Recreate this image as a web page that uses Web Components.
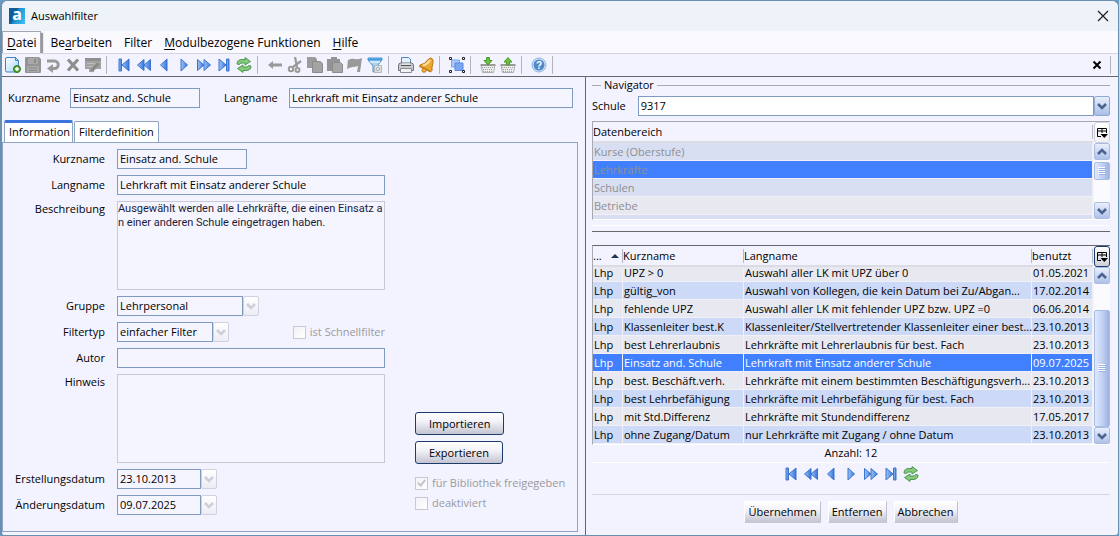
<!DOCTYPE html>
<html lang="de">
<head>
<meta charset="utf-8">
<title>Auswahlfilter</title>
<style>
    html, body {
        margin: 0;
        height: 100%;
    }

    body {
        background: #6a9cc4;
        font: 11px/14px "Open Sans", "Noto Sans", sans-serif;
        color: #000;
    }
</style>
</head>
<body>
<filter-window></filter-window>

<script>
const ICONS = {
    fresh: `<defs><linearGradient id="g" x2="1" y2="1"><stop stop-color="#fff"/><stop offset="1" stop-color="#a8d6fa"/></linearGradient></defs>
        <path d="M2 .5h8.500l3 3V15H2q-1.500 0-1.500-1.500V2Q.5.5 2 .5z" fill="url(#g)" stroke="#3c84c8"/><path d="M10.500.5v3h3z" fill="#d5ecfc" stroke="#3c84c8"/>
        <circle cx="12" cy="12" r="3.500" fill="#58a83a" stroke="#2f7a1c"/><path d="M12 10v4M10 12h4" stroke="#fff" stroke-width="1.500"/>`,
    save: `<path d="M0 1q0-1 1-1h13l2 2v13q0 1-1 1H1q-1 0-1-1z" fill="#949494"/><path d="M3 1h10v6H3zM2 9h12v6H2z" fill="#a8a8a8"/>
        <path d="M4 11h8M4 13.500h8" stroke="#8c8c8c"/><path d="M9 2h2v4H9z" fill="#8a8a8a"/>`,
    undo: `<path d="M2 4h7.500a3.700 3.700 0 0 1 0 7.500H7" fill="none" stroke="#999" stroke-width="3"/><path d="M8 7v9l-6-4.500z" fill="#999"/>`,
    cross: `<path d="M3 2.500l10 11M13 2.500l-10 11" stroke="#8e8e8e" stroke-width="3.200"/>`,
    edit: `<path d="M0 1h16v11H9v3H4v-3H0z" fill="#a2a2a2"/><path d="M0 1h16v3H0z" fill="#8f8f8f"/><path d="M2 6.500h8M2 9.500h6" stroke="#bcbcbc"/><path d="M12.500 5l2.500 2.500-7 7-3 .5.500-3z" fill="#888" stroke="#b0b0b0" stroke-width=".6"/>`,
    first: `<path d="M3 2h2.500v12H3z" class="b"/><path d="M13 2v12L6 8z" class="b"/>`,
    rewind: `<path d="M8 2.500v11L1.500 8z" class="b"/><path d="M14.500 2.500v11L8 8z" class="b"/>`,
    prev: `<path d="M11 2v12L4.500 8z" class="b"/>`,
    next: `<path d="M5 2v12L11.500 8z" class="b"/>`,
    forward: `<path d="M1.500 2.500v11L8 8z" class="b"/><path d="M8 2.500v11L14.500 8z" class="b"/>`,
    last: `<path d="M3 2v12L10 8z" class="b"/><path d="M10.500 2H13v12h-2.500z" class="b"/>`,
    refresh: `<path d="M1 7Q1 2.500 6 2.500H9V.500L14.500 4.500 9 8V6H6Q3.500 6 3.500 7.500z" fill="#86c87c" stroke="#4c9a50"/>
        <path d="M15 9Q15 13.500 10 13.500H7v2L1.500 11.500 7 8v2h3q2.500 0 2.500-1.500z" fill="#86c87c" stroke="#4c9a50"/>`,
    back: `<path d="M1 8l5-4v2.500h9v3H6V12z" fill="#999"/>`,
    cut: `<path d="M8 0l2 10M14 4l-8 6" stroke="#999" stroke-width="2.200"/><circle cx="4" cy="12" r="2.200" fill="none" stroke="#999" stroke-width="2"/><circle cx="10.500" cy="13" r="2" fill="none" stroke="#999" stroke-width="2"/>`,
    copy: `<path d="M0 0h8l2 2v9H0z" fill="#9c9c9c"/><path d="M5.500 4.500h8l2 2v9h-10z" fill="#a4a4a4" stroke="#8c8c8c"/>`,
    paste: `<path d="M0 2h4V0h6v2h3v12H0z" fill="#949494"/><path d="M5.500 5.500h8l2 2v8h-10z" fill="#a6a6a6" stroke="#8c8c8c"/>`,
    flag: `<path d="M1 3q4-2 7-1t7-1l-2 14h-3l1-6q-3 1-5 1t-6 2z" fill="#999"/>`,
    funnel: `<path d="M1 1h14v2l-5 6v5l-4 1V9L1 3z" fill="#a5d2f2" stroke="#4a92cc"/><path d="M1 1.500h14v2H1z" fill="#3f9ae0"/><path d="M3 5h10" stroke="#fff"/>
        <path d="M7.500 8.500h7v7h-7z" fill="#dcdfe2" stroke="#b4b8bc"/><circle cx="11" cy="12" r="1.500" fill="#fff" stroke="#a0a4a8"/>`,
    print: `<path d="M3.500 7V.5h7l2 2V7" fill="#e6f2fd" stroke="#4c86bf"/><path d="M.5 9q0-3 2-3h11q2 0 2 3v4.500H.500z" fill="#c8cace" stroke="#70747a"/>
        <path d="M3 8.500h10" stroke="#505458"/><path d="M2.500 11.500h11v4h-11z" fill="#f2f2f2" stroke="#8a8e94"/><path d="M4 7h8" stroke="#fff"/>`,
    bell: `<path d="M10.500 2Q13 0 14.500 2q1.200 2 .2 5-1 3-.7 6.500l-1.500 1.500L1.500 9.500 2 8Q7 7.500 10.500 2z" fill="#eda730" stroke="#b97412"/><path d="M5 8.500q5-1.500 7-5.500" stroke="#fbe09a" stroke-width="2" fill="none"/><path d="M2 9l11 5.500" stroke="#c47e14"/><circle cx="6" cy="13.300" r="2" fill="#f2b440" stroke="#b97412"/>`,
    group: `<path d="M2.500 3h8v7h-8z" fill="#a9c8f6" stroke="#7da6ea"/><path d="M6 6h8v7.500H6z" fill="#7aa6f0" stroke="#5b8be0"/>
        <g fill="#fff" stroke="#222"><path d="M.5.5h2v2h-2zM13.500.5h2v2h-2zM.5 13.500h2v2h-2zM13.500 13.500h2v2h-2z"/></g>`,
    basketIn: `<path d="M1 8h14l-1.500 7.500h-11z" fill="#ececec" stroke="#b0b0b0"/><path d="M.500 8h15" stroke="#8a8a8a" stroke-width="1.500"/><path d="M2 10.500h12M3 12.500h10M3 14.500h10" stroke="#a0a0a0" stroke-dasharray="1 1"/>
        <path d="M6.500.5h3v3H12L8 8 4 3.500h2.500z" fill="#6fbf3f" stroke="#4a9a2a"/>`,
    basketOut: `<path d="M1 8h14l-1.500 7.500h-11z" fill="#ececec" stroke="#b0b0b0"/><path d="M.500 8h15" stroke="#8a8a8a" stroke-width="1.500"/><path d="M2 10.500h12M3 12.500h10M3 14.500h10" stroke="#a0a0a0" stroke-dasharray="1 1"/>
        <path d="M6.500 8V5H4L8 .5 12 5H9.500v3z" fill="#6fbf3f" stroke="#4a9a2a"/>`,
    help: `<circle cx="8" cy="8" r="7" fill="#d4e4f5" stroke="#8fb3da"/><circle cx="8" cy="8" r="5.500" fill="#5088c8"/><text x="8" y="12" text-anchor="middle" font-size="10" font-weight="700" fill="#fff">?</text>`,
    close: `<path d="M4.500 4.500l7 7M11.500 4.500l-7 7" stroke="#000" stroke-width="2"/>`,
    windowClose: `<path d="M3 3l10 10M13 3L3 13" stroke="#222" stroke-width="1.300"/>`,
    columns: `<path d="M12.500 8V3.500h-9v8H7M3.500 6h9M8 3.500V8" fill="none" stroke="#000"/><path d="M6.500 9h7.500l-3.700 4z"/>`,
    up: `<path d="M4 10l4-4 4 4" fill="none" stroke="#4a6390" stroke-width="2.600"/>`,
    down: `<path d="M4 6l4 4 4-4" fill="none" stroke="#4a6390" stroke-width="2.600"/>`,
    downOff: `<path d="M4 6l4 4 4-4" fill="none" stroke="#cfcfdc" stroke-width="2.600"/>`,
    grip: `<path d="M4 4.500h7M4 6.500h7M4 8.500h7M4 10.500h7" stroke="#fff"/><path d="M5 5.500h7M5 7.500h7M5 9.500h7M5 11.500h7" stroke="#9db3e2"/>`
};

// attaches an open shadow root with the given markup
function render(host, html) {
    host.attachShadow({ mode: 'open' }).innerHTML = html;
}

class UiIcon extends HTMLElement {
    connectedCallback() {
        render(this, `
            <style>
                :host {
                    display: block;
                    flex: none;
                    width: 16px;
                    height: 16px;
                }

                svg {
                    display: block;
                }

                .b {
                    fill: url(#blue);
                    stroke: #3c72d0;
                }
            </style>
            <svg width="16" height="16" viewBox="0 0 16 16" aria-hidden="true">
                <defs><linearGradient id="blue"><stop stop-color="#9cc8f6"/><stop offset="1" stop-color="#3474dc"/></linearGradient></defs>
                ${ICONS[this.getAttribute('name')]}
            </svg>
        `);
    }
}
customElements.define('ui-icon', UiIcon);

class IconStrip extends HTMLElement {
    connectedCallback() {
        const items = this.getAttribute('icons').split(' ').map(name => name === '|'
            ? '<i></i>'
            : `<button type="button" aria-label="${name}"><ui-icon name="${name}"></ui-icon></button>`);
        render(this, `
            <style>
                :host {
                    display: flex;
                    align-items: center;
                }

                button {
                    width: 20px;
                    height: 20px;
                    padding: 2px;
                    border: 0;
                    background: none;
                }

                i {
                    flex: none;
                    width: 1px;
                    height: 18px;
                    margin: 0 7px 0 3px;
                    background: #b4b4bc;
                }
            </style>
            ${items.join('')}
        `);
    }
}
customElements.define('icon-strip', IconStrip);

class TitleBar extends HTMLElement {
    connectedCallback() {
        render(this, `
            <style>
                :host {
                    display: flex;
                    align-items: center;
                    gap: 6px;
                    height: 30px;
                    padding: 0 7px;
                    box-sizing: border-box;
                    background: #edf3f9;
                }

                .logo {
                    width: 16px;
                    height: 16px;
                    background: linear-gradient(115deg, #0f5c98 35%, #1f93d4 50%, #3fc0f5);
                    color: #fff;
                    font-weight: 700;
                    font-size: 16px;
                    line-height: 12px;
                    text-align: center;
                }

                h1 {
                    flex: 1;
                    margin: 0;
                    font-size: 11px;
                    font-weight: 400;
                }

                button {
                    padding: 0;
                    border: 0;
                    background: none;
                }
            </style>
            <span class="logo">a</span>
            <h1><slot></slot></h1>
            <button type="button" aria-label="Schließen"><ui-icon name="windowClose"></ui-icon></button>
        `);
    }
}
customElements.define('title-bar', TitleBar);

class MenuBar extends HTMLElement {
    connectedCallback() {
        render(this, `
            <style>
                :host {
                    display: block;
                    background: #f9f9fe;
                    border-bottom: 1px solid #d4d4e2;
                }

                nav {
                    display: flex;
                    height: 22px;
                }

                button {
                    padding: 2px 6px 0;
                    border: 0;
                    background: none;
                    font: inherit;
                    font-size: 12px;
                }

                button.open {
                    padding: 1px 4px 0;
                    margin-right: 3px;
                    border: 1px solid #a4a4b4;
                    border-bottom: 0;
                    box-shadow: 2px 2px 1px #999;
                    clip-path: inset(0 -3px 0 0);
                }

                u {
                    text-underline-offset: 2px;
                }
            </style>
            <nav>
                <button type="button" class="open"><u>D</u>atei</button>
                <button type="button">Be<u>a</u>rbeiten</button>
                <button type="button">Filter</button>
                <button type="button"><u>M</u>odulbezogene Funktionen</button>
                <button type="button"><u>H</u>ilfe</button>
            </nav>
        `);
    }
}
customElements.define('menu-bar', MenuBar);

const FIELD_STYLE = `
    label {
        white-space: nowrap;
    }

    input, select, textarea {
        box-sizing: border-box;
        width: 100%;
        min-width: 0;
        height: 20px;
        margin: 0;
        padding: 0 2px;
        border: 1px solid #7f9cc0;
        border-radius: 0;
        background: #f5f5ff;
        color: #000;
        font: inherit;
        opacity: 1;
        appearance: none;
        outline: 0;
    }

    input {
        padding-bottom: 2px;
    }

    textarea {
        display: block;
        height: 89px;
        padding: 0;
        border-color: #c8c8d6;
        color: #1c1c3c;
        font-family: Roboto, "Liberation Sans", sans-serif;
        resize: none;
        overflow: hidden;
        white-space: pre;
    }

    .combo {
        display: flex;
        min-width: 0;
    }

    .arrow {
        display: flex;
        align-items: center;
        justify-content: center;
        flex: none;
        box-sizing: border-box;
        width: 16px;
        height: 20px;
        padding: 0;
        border: 1px solid #d0d0de;
        border-radius: 2px;
        background: linear-gradient(#fff, #ececf4);
        overflow: hidden;
    }
`;

// label beside a text box, text area, drop-down or date box
class FormField extends HTMLElement {
    connectedCallback() {
        const value = this.getAttribute('value') || '';
        const arrow = this.hasAttribute('active')
            ? '<span class="arrow active"><ui-icon name="down"></ui-icon></span>'
            : '<span class="arrow"><ui-icon name="downOff"></ui-icon></span>';
        const control = {
            text: `<input id="f" type="text" value="${value}">`,
            area: `<textarea id="f">${value}</textarea>`,
            select: `<div class="combo"><select id="f"><option>${value}</option></select>${arrow}</div>`,
            date: `<div class="combo"><input id="f" type="text" value="${value}">${arrow}</div>`
        }[this.getAttribute('kind') || 'text'];
        render(this, `
            <style>
                ${FIELD_STYLE}
                :host {
                    display: grid;
                    grid-template-columns: var(--label-width, auto) minmax(0, 1fr);
                    column-gap: 12px;
                    align-items: center;
                    text-align: var(--label-align, left);
                }

                :host([kind=area]) {
                    align-items: start;
                }

                :host([kind=area]) label {
                    padding-top: 1px;
                }

                :host([active]) select {
                    background: #fff;
                }

                .active {
                    border-color: #8ea9d6;
                    background: linear-gradient(#e8effc, #aabfe6);
                }
            </style>
            <label for="f">${this.getAttribute('label')}</label>
            ${control}
        `);
    }
}
customElements.define('form-field', FormField);

class CheckField extends HTMLElement {
    connectedCallback() {
        render(this, `
            <style>
                :host {
                    display: block;
                    color: #9a9a9e;
                }

                label {
                    display: flex;
                    align-items: center;
                    gap: 4px;
                    white-space: nowrap;
                }

                input {
                    appearance: none;
                    display: grid;
                    place-items: center;
                    flex: none;
                    box-sizing: border-box;
                    width: 13px;
                    height: 13px;
                    margin: 0;
                    border: 1px solid #c8c8d4;
                    background: linear-gradient(135deg, #f2f2f6, #fff);
                }

                input:checked::before {
                    content: "";
                    width: 3px;
                    height: 6px;
                    margin-bottom: 2px;
                    border: solid #c4c4d0;
                    border-width: 0 2px 2px 0;
                    transform: rotate(40deg);
                }
            </style>
            <label><input type="checkbox" disabled ${this.hasAttribute('checked') ? 'checked' : ''}><slot></slot></label>
        `);
    }
}
customElements.define('check-field', CheckField);

class PushButton extends HTMLElement {
    connectedCallback() {
        render(this, `
            <style>
                :host {
                    display: block;
                }

                button {
                    height: 23px;
                    padding: 0 13px;
                    border: 1px solid #1c3c6c;
                    border-radius: 3px;
                    background: linear-gradient(#fff, #f2f2f8 40%, #c4c4d2);
                    font: inherit;
                    color: inherit;
                    white-space: nowrap;
                }

                :host([flat]) button {
                    height: 22px;
                    padding: 0 3px;
                    border-color: #fff #c0c0ca #c8c8d2 #fff;
                    border-radius: 0;
                }
            </style>
            <button type="button"><slot></slot></button>
        `);
    }
}
customElements.define('push-button', PushButton);

class ScrollRail extends HTMLElement {
    connectedCallback() {
        const before = this.getAttribute('before');
        const thumb = this.getAttribute('thumb');
        const after = this.getAttribute('after');
        render(this, `
            <style>
                :host {
                    display: flex;
                    flex-direction: column;
                    width: 16px;
                    background: #fbfbff;
                }

                button, .thumb {
                    display: flex;
                    align-items: center;
                    justify-content: center;
                    box-sizing: border-box;
                    width: 16px;
                    height: 17px;
                    padding: 0;
                    border: 1px solid #a9bce4;
                    border-radius: 2px;
                    background: linear-gradient(#e9effc, #b0c2e8);
                    overflow: hidden;
                }

                .columns {
                    height: 21px;
                    border-color: #d0d0dc;
                    border-radius: 3px;
                    background: linear-gradient(#fff, #f0f0f6);
                }

                :host([focused]) .columns {
                    border-color: #1c3c6c;
                    background: linear-gradient(#fff, #d0d0dc);
                }

                .track {
                    flex: 1;
                    display: flex;
                    flex-direction: column;
                }

                .thumb {
                    flex: ${thumb};
                    background: linear-gradient(90deg, #dfe8fc, #c3d2f4 50%, #9db2e2);
                }
            </style>
            <button type="button" class="columns" aria-label="Spalten"><ui-icon name="columns"></ui-icon></button>
            <button type="button" aria-label="Nach oben"><ui-icon name="up"></ui-icon></button>
            <div class="track">
                <div style="flex: ${before}"></div>
                <div class="thumb"><ui-icon name="grip"></ui-icon></div>
                <div style="flex: ${after}"></div>
            </div>
            <button type="button" aria-label="Nach unten"><ui-icon name="down"></ui-icon></button>
        `);
    }
}
customElements.define('scroll-rail', ScrollRail);

const TABLE_STYLE = `
    :host {
        display: flex;
        gap: 1px;
        box-sizing: border-box;
        border-top: 1px solid #a8a8b0;
        border-left: 1px solid #a8a8b0;
        border-bottom: 1px solid #fff;
    }

    .view {
        flex: 1;
        min-width: 0;
        overflow: hidden;
    }

    table {
        width: 100%;
        table-layout: fixed;
        border-collapse: separate;
        border-spacing: 0;
    }

    th, td {
        box-sizing: border-box;
        padding: 0 1px;
        text-align: left;
        font-weight: 400;
        white-space: nowrap;
    }

    th {
        position: sticky;
        top: 0;
        height: 21px;
        padding: 0;
        background: linear-gradient(#b8b8c4, #b8b8c4) right center / 1px 14px no-repeat #f3f3ff;
        border-bottom: 2px solid #dcdce4;
    }

    td {
        height: 18px;
        border-bottom: 1px solid #f0f0f6;
        border-right: 1px solid #f0f0f6;
    }
`;

class AreaTable extends HTMLElement {
    connectedCallback() {
        const rows = ['Kurse (Oberstufe)', 'Lehrkräfte', 'Schulen', 'Betriebe', ''];
        render(this, `
            <style>
                ${TABLE_STYLE}
                .view {
                    height: 97px;
                }

                td {
                    background: #d8dff2;
                    color: #8e8e92;
                }

                tr:nth-child(4) td {
                    background: #e8e8f0;
                }

                tr.selected td {
                    background: #4080ff;
                    color: #8c8e94;
                }
            </style>
            <div class="view">
                <table>
                    <thead><tr><th>Datenbereich</th></tr></thead>
                    <tbody>${rows.map((r, i) => `<tr${i === 1 ? ' class="selected"' : ''}><td>${r}</td></tr>`).join('')}</tbody>
                </table>
            </div>
            <scroll-rail before="2" thumb="17" after="23"></scroll-rail>
        `);
    }
}
customElements.define('area-table', AreaTable);

class FilterTable extends HTMLElement {
    connectedCallback() {
        const rows = [
            ['UPZ &gt; 0', 'Auswahl aller LK mit UPZ über 0', '01.05.2021'],
            ['gültig_von', 'Auswahl von Kollegen, die kein Datum bei Zu/Abgan...', '17.02.2014'],
            ['fehlende UPZ', 'Auswahl aller LK mit fehlender UPZ bzw. UPZ =0', '06.06.2014'],
            ['Klassenleiter best.K', 'Klassenleiter/Stellvertretender Klassenleiter einer best...', '23.10.2013'],
            ['best Lehrerlaubnis', 'Lehrkräfte mit Lehrerlaubnis für best. Fach', '23.10.2013'],
            ['Einsatz and. Schule', 'Lehrkraft mit Einsatz anderer Schule', '09.07.2025'],
            ['best. Beschäft.verh.', 'Lehrkräfte mit einem bestimmten Beschäftigungsverh...', '23.10.2013'],
            ['best Lehrbefähigung', 'Lehrkräfte mit Lehrbefähigung für best. Fach', '23.10.2013'],
            ['mit Std.Differenz', 'Lehrkräfte mit Stundendifferenz', '17.05.2017'],
            ['ohne Zugang/Datum', 'nur Lehrkräfte mit Zugang / ohne Datum', '23.10.2013']
        ];
        render(this, `
            <style>
                ${TABLE_STYLE}
                :host {
                    border-top-color: #66666c;
                }

                .view {
                    height: 198px;
                }

                td {
                    padding-right: 0;
                    background: #e8e8f0;
                }

                tr:nth-child(even) td {
                    background: #ccd9f7;
                }

                tr.selected td {
                    background: #4080ff;
                    color: #fff;
                }

                .type {
                    width: 30px;
                }

                .short {
                    width: 121px;
                }

                .used {
                    width: 61px;
                }

                .sort {
                    display: flex;
                    justify-content: space-between;
                    align-items: center;
                    padding-right: 4px;
                }
            </style>
            <div class="view">
                <table>
                    <thead>
                        <tr>
                            <th class="type"><span class="sort">...<svg width="8" height="4"><path d="M0 4l4-4 4 4z" fill="#1c3850"/></svg></span></th>
                            <th class="short">Kurzname</th>
                            <th>Langname</th>
                            <th class="used">benutzt</th>
                        </tr>
                    </thead>
                    <tbody>
                        ${rows.map((r, i) => `<tr${i === 5 ? ' class="selected"' : ''}><td>Lhp</td>${r.map(c => `<td>${c}</td>`).join('')}</tr>`).join('')}
                    </tbody>
                </table>
            </div>
            <scroll-rail focused before="26" thumb="117" after="0"></scroll-rail>
        `);
        // the list stands scrolled to its end
        const view = this.shadowRoot.querySelector('.view');
        view.scrollTop = view.scrollHeight;
    }
}
customElements.define('filter-table', FilterTable);

class FilterForm extends HTMLElement {
    connectedCallback() {
        render(this, `
            <style>
                :host {
                    display: flex;
                    flex-direction: column;
                    box-sizing: border-box;
                    padding: 11px 7px 3px 0;
                }

                .head {
                    display: flex;
                    gap: 24px;
                    padding-left: 6px;
                    padding-right: 5px;
                    margin-bottom: 12px;
                }

                .head form-field:first-child {
                    --label-width: 50px;
                    flex: 0 0 192px;
                }

                .head form-field:last-child {
                    --label-width: 53px;
                    flex: 1;
                }

                .tabs {
                    display: flex;
                    align-items: flex-end;
                    gap: 1px;
                    padding-left: 2px;
                }

                .tabs button {
                    height: 21px;
                    padding: 0 4px;
                    border: 1px solid #8ea4c4;
                    border-bottom: 0;
                    border-radius: 2px 2px 0 0;
                    background: #fff;
                    font: inherit;
                }

                .tabs button.current {
                    height: 22px;
                    border-top: 3px solid #3a74e0;
                    padding: 0 2px 2px 4px;
                }

                .panel {
                    flex: 1;
                    display: flex;
                    gap: 30px;
                    padding: 6px 7px 15px;
                    border: 1px solid #8ea4c4;
                }

                .fields {
                    --label-width: 95px;
                    --label-align: right;
                    flex: 0 1 375px;
                    display: flex;
                    flex-direction: column;
                    gap: 6px;
                }

                .short {
                    width: 237px;
                }

                .group {
                    width: 249px;
                }

                .type {
                    display: flex;
                    align-items: center;
                    justify-content: space-between;
                }

                .type form-field {
                    width: 219px;
                }

                .date {
                    width: 207px;
                }

                .actions {
                    display: flex;
                    flex-direction: column;
                    justify-content: flex-end;
                    gap: 6px;
                    padding-bottom: 6px;
                }

                .checks {
                    display: flex;
                    flex-direction: column;
                    gap: 6px;
                    padding-top: 6px;
                }
            </style>
            <div class="head">
                <form-field label="Kurzname" value="Einsatz and. Schule"></form-field>
                <form-field label="Langname" value="Lehrkraft mit Einsatz anderer Schule"></form-field>
            </div>
            <div class="tabs" role="tablist">
                <button type="button" role="tab" class="current" aria-selected="true">Information</button>
                <button type="button" role="tab">Filterdefinition</button>
            </div>
            <section class="panel">
                <div class="fields">
                    <form-field class="short" label="Kurzname" value="Einsatz and. Schule"></form-field>
                    <form-field label="Langname" value="Lehrkraft mit Einsatz anderer Schule"></form-field>
                    <form-field kind="area" label="Beschreibung" value="Ausgewählt werden alle Lehrkräfte, die einen Einsatz a&#10;n einer anderen Schule eingetragen haben."></form-field>
                    <form-field class="group" kind="select" label="Gruppe" value="Lehrpersonal"></form-field>
                    <div class="type">
                        <form-field kind="select" label="Filtertyp" value="einfacher Filter"></form-field>
                        <check-field>ist Schnellfilter</check-field>
                    </div>
                    <form-field label="Autor"></form-field>
                    <form-field kind="area" label="Hinweis"></form-field>
                    <form-field class="date" kind="date" label="Erstellungsdatum" value="23.10.2013"></form-field>
                    <form-field class="date" kind="date" label="Änderungsdatum" value="09.07.2025"></form-field>
                </div>
                <div class="actions">
                    <push-button>Importieren</push-button>
                    <push-button>Exportieren</push-button>
                    <div class="checks">
                        <check-field checked>für Bibliothek freigegeben</check-field>
                        <check-field>deaktiviert</check-field>
                    </div>
                </div>
            </section>
        `);
    }
}
customElements.define('filter-form', FilterForm);

class NavigatorPane extends HTMLElement {
    connectedCallback() {
        render(this, `
            <style>
                :host {
                    display: block;
                    box-sizing: border-box;
                    padding: 1px 8px 0 6px;
                    border-left: 1px solid #66666c;
                }

                fieldset {
                    min-width: 0;
                    margin: 0;
                    padding: 4px 0 0;
                    border: 0;
                    border-top: 1px solid #a8a8b0;
                }

                legend {
                    margin-left: 9px;
                    padding: 0 3px;
                }

                area-table {
                    margin-top: 5px;
                }

                .splitter {
                    height: 5px;
                    margin: 5px 0 7px;
                    border-top: 1px solid #fff;
                    border-bottom: 1px solid #66666c;
                }

                filter-table {
                    margin-top: 13px;
                }

                p {
                    margin: 0;
                    padding: 1px 0 2px;
                    border-bottom: 1px solid #fff;
                    text-align: center;
                }

                .pager {
                    display: flex;
                    justify-content: center;
                    padding: 1px 0 10px;
                    border-bottom: 1px solid #d4d4e2;
                }

                .buttons {
                    display: flex;
                    justify-content: center;
                    gap: 7px;
                    padding-top: 6px;
                }
            </style>
            <fieldset>
                <legend>Navigator</legend>
                <form-field kind="select" active label="Schule" value="9317"></form-field>
                <area-table></area-table>
            </fieldset>
            <div class="splitter"></div>
            <filter-table></filter-table>
            <p>Anzahl: 12</p>
            <div class="pager"><icon-strip icons="first rewind prev next forward last refresh"></icon-strip></div>
            <div class="buttons">
                <push-button flat>Übernehmen</push-button>
                <push-button flat>Entfernen</push-button>
                <push-button flat>Abbrechen</push-button>
            </div>
        `);
    }
}
customElements.define('navigator-pane', NavigatorPane);

class FilterWindow extends HTMLElement {
    connectedCallback() {
        render(this, `
            <style>
                :host {
                    display: flex;
                    flex-direction: column;
                    box-sizing: border-box;
                    min-height: 100%;
                    border: 1px solid #6a90b0;
                    border-left-width: 2px;
                    border-radius: 7px 7px 4px 4px;
                    background: #f3f3ff;
                    overflow: hidden;
                }

                .tools {
                    display: flex;
                    align-items: center;
                    justify-content: space-between;
                    height: 22px;
                    padding-left: 1px;
                    border-bottom: 1px solid #66666c;
                }

                main {
                    flex: 1;
                    display: grid;
                    grid-template-columns: minmax(0, 583fr) minmax(0, 533fr);
                }
            </style>
            <title-bar>Auswahlfilter</title-bar>
            <menu-bar></menu-bar>
            <div class="tools">
                <icon-strip icons="fresh save undo cross edit | first rewind prev next forward last refresh | back cut copy paste flag funnel | print bell | group | basketIn basketOut | help |"></icon-strip>
                <icon-strip icons="close |"></icon-strip>
            </div>
            <main>
                <filter-form></filter-form>
                <navigator-pane></navigator-pane>
            </main>
        `);
    }
}
customElements.define('filter-window', FilterWindow);
</script>
</body>
</html>
